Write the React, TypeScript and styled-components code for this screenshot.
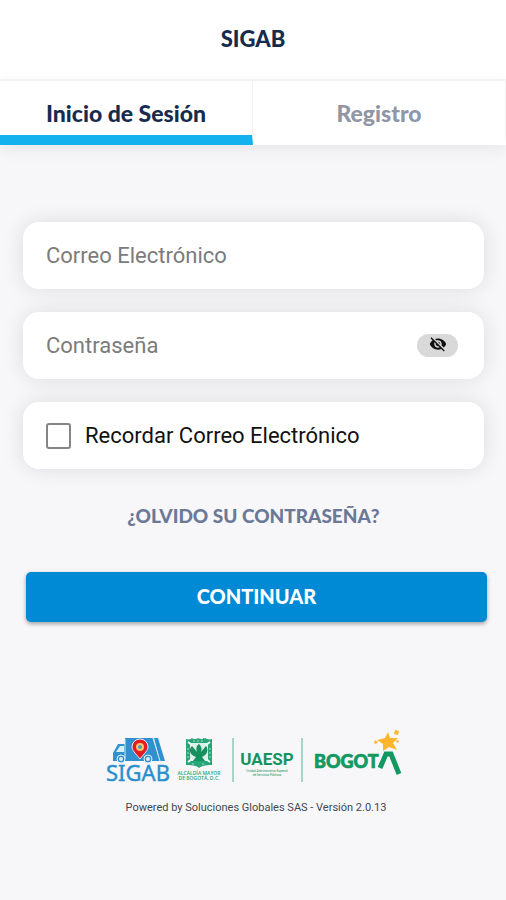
import React, { useState } from "react";
import styled, { createGlobalStyle } from "styled-components";
import { MdVisibility, MdVisibilityOff } from "react-icons/md";

const GlobalStyle = createGlobalStyle`
  *, *::before, *::after { box-sizing: border-box; }
  body {
    margin: 0;
    background: #f7f7fa;
    font-family: Roboto, sans-serif;
  }
`;

const Page = styled.div`
  display: flex;
  flex-direction: column;
  min-height: 100vh;
`;

const Header = styled.header`
  display: flex;
  align-items: center;
  justify-content: center;
  height: 81px;
  padding-bottom: 2px;
  background: #fff;
  border-bottom: 2px solid #f6f6f7;
`;

const Title = styled.h1`
  margin: 0;
  font: 900 22px/28px Lato, sans-serif;
  color: #172b4d;
`;

const Tabs = styled.nav`
  display: grid;
  grid-template-columns: 1fr 1fr;
  background: #fff;
  box-shadow: 0 4px 16px rgba(0, 0, 0, 0.07);
`;

const Tab = styled.button<{ $active: boolean }>`
  height: 64px;
  padding: 10px 0 0;
  border: 0;
  border-right: 1px solid #f3f3f5;
  border-bottom: 10px solid ${(p) => (p.$active ? "#14b1ef" : "#fff")};
  background: #fff;
  color: ${(p) => (p.$active ? "#172b4d" : "#8f96a5")};
  font: 900 23px/28px Lato, sans-serif;
  cursor: pointer;
`;

const Form = styled.form`
  display: flex;
  flex-direction: column;
  gap: 23px;
  padding: 77px 22px 0 23px;
`;

const Card = styled.div`
  display: flex;
  align-items: center;
  height: 67px;
  padding: 0 26px 0 23px;
  border-radius: 16px;
  background: #fff;
  box-shadow: 0 0 22px rgba(0, 0, 0, 0.11);
`;

const TextInput = styled.input`
  flex: 1;
  min-width: 0;
  padding: 0;
  border: 0;
  outline: 0;
  background: transparent;
  color: #111;
  font: 400 22px/28px Roboto, sans-serif;

  &::placeholder {
    color: #7b7b7b;
    opacity: 1;
  }
`;

const EyeButton = styled.button`
  display: flex;
  align-items: flex-start;
  justify-content: center;
  width: 41px;
  height: 23px;
  padding: 1px 0 0;
  border: 0;
  border-radius: 12px;
  background: #d9d9d9;
  color: #111;
  cursor: pointer;
`;

const CheckLabel = styled.label`
  display: flex;
  align-items: center;
  gap: 14px;
  color: #111;
  font: 400 22px/28px Roboto, sans-serif;
`;

const Checkbox = styled.input`
  appearance: none;
  width: 25px;
  height: 26px;
  margin: 0;
  border: 2px solid #858585;
  border-radius: 3px;
  background: #fff;

  &:checked {
    background: #008ad5;
  }
`;

const ForgotLink = styled.a`
  align-self: center;
  margin: 10px 0 17px;
  color: #6b7896;
  font: 900 19px/28px Lato, sans-serif;
  text-decoration: none;
`;

const SubmitButton = styled.button`
  height: 50px;
  margin: 2px -3px 0 3px;
  padding: 0 0 2px;
  border: 0;
  border-radius: 5px;
  background: #008ad5;
  box-shadow: 0 2px 4px rgba(0, 0, 0, 0.35);
  color: #fff;
  font: 900 20px/28px Lato, sans-serif;
  cursor: pointer;
`;

const Footer = styled.footer`
  display: flex;
  flex-direction: column;
  align-items: center;
  gap: 14px;
  padding: 106px 16px 24px;
`;

const Logos = styled.div`
  display: flex;
  align-items: flex-start;
`;

const Credit = styled.p`
  margin: 0;
  padding-left: 6px;
  color: #43474f;
  font: 400 11px/16px Roboto, sans-serif;
`;

function SigabLogo() {
  return (
    <svg width="70" height="58" viewBox="0 0 70 58" role="img" aria-label="SIGAB">
      <path d="M9 33V25l5-9h7v-6h28l7 23z" fill="#3191cf" />
      <path d="M50 10h4l7 23h-5z" fill="#3191cf" />
      <path d="M12 24l4-6h4v6z" fill="#d9edf8" />
      <path d="M21 11v20M49 10l7 23" stroke="#d5eaf6" strokeWidth="1" />
      <circle cx="17" cy="31" r="4" fill="#3191cf" stroke="#eef6fb" strokeWidth="1" />
      <circle cx="44" cy="31" r="4" fill="#3191cf" stroke="#eef6fb" strokeWidth="1" />
      <circle cx="17" cy="31" r="2" fill="#d9edf8" />
      <circle cx="44" cy="31" r="2" fill="#d9edf8" />
      <path d="M36 31C31 25 28 22 28 19a8 8 0 0 1 16 0c0 3-3 6-8 12z" fill="#e51b23" stroke="#d9edf8" strokeWidth="1" />
      <circle cx="36" cy="19" r="3" fill="#4f9abf" stroke="#ffc76b" strokeWidth="2" />
      <text x="34" y="53" textAnchor="middle" fill="#288fce" stroke="#288fce" strokeWidth="0.4" fontFamily="Noto Sans, sans-serif" fontSize="22">SIGAB</text>
    </svg>
  );
}

function CityHallLogo() {
  return (
    <svg width="50" height="58" viewBox="0 0 50 58" role="img" aria-label="Alcaldía Mayor de Bogotá">
      <path d="M12 11c3 1 5 0 6-1 2 2 5 1 6 0 2 1 5 2 7 0 2 1 4 2 7 1v26c-4 0-9 0-13 3-3-3-9-3-13-3z" fill="#27a678" />
      <path d="M16 15h18v18H16z" fill="#dcf0e9" />
      <path d="M25 16c3 3 3 6 2 8l5-6c3 4 1 9-4 11l3 4h-12l3-4c-6-2-8-7-4-11l5 6c-1-3-1-6 2-8z" fill="#16905f" />
      <path d="M14 14l4 3M36 14l-4 3M14 34l4-3M36 34l-4-3" stroke="#ecf8f4" strokeWidth="2" />
      <path d="M14 20v10M36 20v10M19 13h12M18 36h4M28 36h4" stroke="#9ed9c2" strokeWidth="1" strokeDasharray="2 2" />
      <text x="25" y="47" textAnchor="middle" fill="#27a678" fontFamily="Open Sans, sans-serif" fontWeight="600" fontSize="5">ALCALDÍA MAYOR</text>
      <text x="25" y="52" textAnchor="middle" fill="#27a678" fontFamily="Open Sans, sans-serif" fontWeight="600" fontSize="5">DE BOGOTÁ, D.C.</text>
    </svg>
  );
}

function UaespLogo() {
  return (
    <svg width="84" height="58" viewBox="0 0 84 58" role="img" aria-label="UAESP">
      <path d="M9 10v44M78 10v44" stroke="#a7d4c3" strokeWidth="2" />
      <text x="43" y="37" textAnchor="middle" fill="#15935c" fontFamily="Roboto, sans-serif" fontWeight="700" fontSize="17">UAESP</text>
      <text x="43" y="44" textAnchor="middle" fill="#15935c" fontFamily="Roboto, sans-serif" fontSize="3">Unidad Administrativa Especial</text>
      <text x="43" y="48" textAnchor="middle" fill="#15935c" fontFamily="Roboto, sans-serif" fontSize="3">de Servicios Públicos</text>
    </svg>
  );
}

function BogotaLogo() {
  return (
    <svg width="94" height="58" viewBox="0 0 94 58" role="img" aria-label="Bogotá">
      <text x="6" y="40" fill="#129961" stroke="#129961" strokeWidth="0.7" fontFamily="Lato, sans-serif" fontWeight="900" fontSize="18">BOGOT</text>
      <path d="M72 40l6-14h5l8 20" fill="none" stroke="#129961" strokeWidth="5" />
      <path d="M80 4l2 6 8 0-5 5 4 7-8-3-6 4 0-7-6-4 8-2z" fill="#fdb52c" />
      <path d="M87 2l4 1-1 4-4-1zM67 12l3 2-2 2-2-1zM89 12l2 1-1 2-2-1z" fill="#fdb52c" />
    </svg>
  );
}

export default function App() {
  const [tab, setTab] = useState("login");
  const [visible, setVisible] = useState(false);

  return (
    <Page>
      <GlobalStyle />
      <Header>
        <Title>SIGAB</Title>
      </Header>
      <Tabs>
        <Tab type="button" $active={tab === "login"} onClick={() => setTab("login")}>
          Inicio de Sesión
        </Tab>
        <Tab type="button" $active={tab === "register"} onClick={() => setTab("register")}>
          Registro
        </Tab>
      </Tabs>
      <Form onSubmit={(e) => e.preventDefault()}>
        <Card>
          <TextInput type="email" placeholder="Correo Electrónico" aria-label="Correo Electrónico" />
        </Card>
        <Card>
          <TextInput type={visible ? "text" : "password"} placeholder="Contraseña" aria-label="Contraseña" />
          <EyeButton type="button" aria-label="Mostrar contraseña" onClick={() => setVisible(!visible)}>
            {visible ? <MdVisibility size={18} /> : <MdVisibilityOff size={18} />}
          </EyeButton>
        </Card>
        <Card>
          <CheckLabel>
            <Checkbox type="checkbox" />
            Recordar Correo Electrónico
          </CheckLabel>
        </Card>
        <ForgotLink href="#recuperar">¿OLVIDO SU CONTRASEÑA?</ForgotLink>
        <SubmitButton type="submit">CONTINUAR</SubmitButton>
      </Form>
      <Footer>
        <Logos>
          <SigabLogo />
          <CityHallLogo />
          <UaespLogo />
          <BogotaLogo />
        </Logos>
        <Credit>Powered by Soluciones Globales SAS - Versión 2.0.13</Credit>
      </Footer>
    </Page>
  );
}
